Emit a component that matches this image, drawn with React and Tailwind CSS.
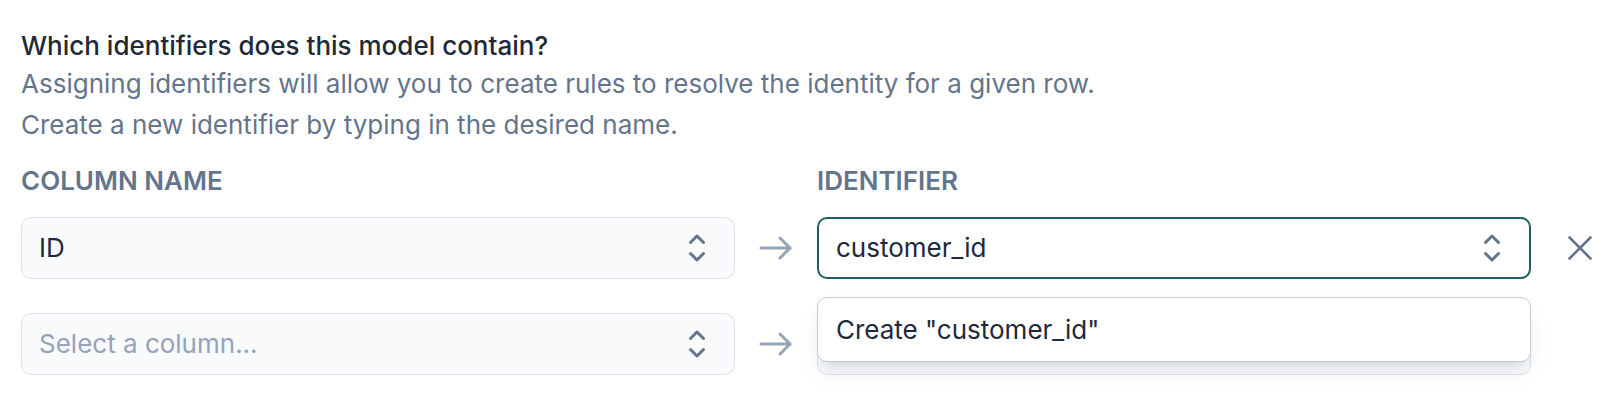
import React from "react";

function Chevrons() {
  return (
    <svg width="18" height="30" viewBox="0 0 18 30" fill="none" stroke="#64748b" strokeWidth="3" strokeLinecap="round" strokeLinejoin="round">
      <path d="M2.5 9.5 L9 3 L15.5 9.5" />
      <path d="M2.5 20.5 L9 27 L15.5 20.5" />
    </svg>
  );
}

function Arrow() {
  return (
    <svg width="34" height="26" viewBox="0 0 34 26" fill="none" stroke="#94a3b8" strokeWidth="3" strokeLinecap="round" strokeLinejoin="round">
      <path d="M2 13 H31" />
      <path d="M21 3 L31 13 L21 23" />
    </svg>
  );
}

function XIcon() {
  return (
    <svg width="26" height="26" viewBox="0 0 26 26" fill="none" stroke="#64748b" strokeWidth="2.6" strokeLinecap="round">
      <path d="M2.5 2.5 L23.5 23.5" />
      <path d="M23.5 2.5 L2.5 23.5" />
    </svg>
  );
}

function Select({ children, focused, placeholder }) {
  return (
    <div
      className={
        "h-[62px] flex items-center justify-between pl-[17px] pr-[28px] rounded-[10px] " +
        (focused
          ? "bg-white border-2 border-[#1d5f65]"
          : "bg-[#f8fafc] border-[1.5px] border-[#dde3ea]")
      }
    >
      <span
        className={
          "text-[26px] leading-none " +
          (placeholder ? "text-[#94a3b8]" : "text-[#1e293b]")
        }
      >
        {children}
      </span>
      <Chevrons />
    </div>
  );
}

export default function App() {
  return (
    <div
      className="w-full h-[412px] bg-white pl-[21px] pt-[28px] overflow-hidden"
      style={{ fontFamily: "Inter, 'Noto Sans', sans-serif" }}
    >
      <div className="text-[26px] leading-[35px]">
        <p className="font-medium text-[#1f2937]">Which identifiers does this model contain?</p>
        <p className="mt-[3px] text-[#64748b]">
          Assigning identifiers will allow you to create rules to resolve the identity for a given row.
        </p>
        <p className="mt-[6px] text-[#64748b]">Create a new identifier by typing in the desired name.</p>
      </div>

      <div className="grid grid-cols-[714px_82px_714px_98px] mt-[23px]">
        <div className="text-[26px] leading-[32px] font-semibold uppercase text-[#64748b]">Column name</div>
        <div />
        <div className="text-[26px] leading-[32px] font-semibold uppercase text-[#64748b]">Identifier</div>
        <div />
      </div>

      <div className="grid grid-cols-[714px_82px_714px_98px] mt-[20px] gap-y-[34px]">
        <Select>ID</Select>
        <div className="flex items-center justify-center">
          <Arrow />
        </div>
        <div className="relative">
          <Select focused>customer_id</Select>
          <div className="absolute left-0 right-0 top-[80px] z-10 h-[65px] flex items-center pl-[18px] bg-white rounded-[10px] border-[1.5px] border-[#c3cbd6] shadow-[0_12px_24px_-4px_rgba(15,23,42,0.10),0_6px_10px_-6px_rgba(15,23,42,0.12)]">
            <span className="text-[26px] leading-none text-[#1e293b]">Create "customer_id"</span>
          </div>
        </div>
        <div className="flex items-center justify-center">
          <XIcon />
        </div>

        <Select placeholder>Select a column...</Select>
        <div className="flex items-center justify-center">
          <Arrow />
        </div>
        <Select placeholder>{""}</Select>
        <div />
      </div>
    </div>
  );
}
